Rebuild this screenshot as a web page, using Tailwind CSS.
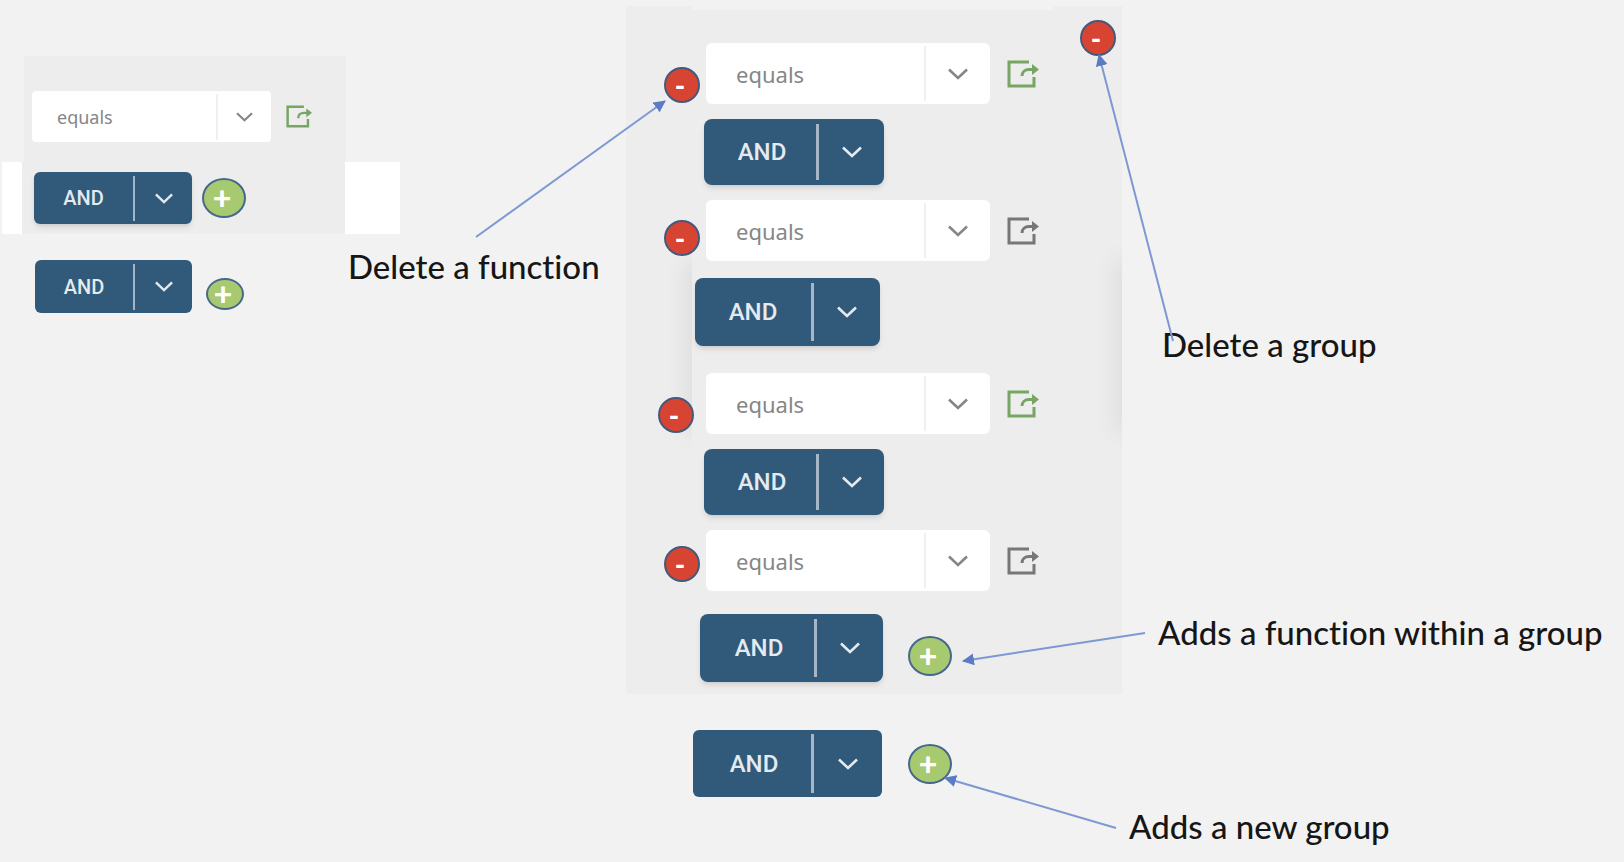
<!DOCTYPE html>
<html lang="en" class="h-full">
<head>
    <meta charset="UTF-8">
    <meta name="viewport" content="width=device-width, initial-scale=1.0">
    <title>Function groups</title>
    <script src="https://cdn.jsdelivr.net/npm/@tailwindcss/browser@4"></script>
</head>
<body class="min-h-full bg-[#f2f2f2] font-['Lato',sans-serif] text-[#161616]">
    <!-- Shared icons -->
    <svg class="absolute h-0 w-0" aria-hidden="true">
        <defs>
            <symbol id="chevron" viewBox="0 0 20 12">
                <path d="M1 1.500 10 10l9-8.500" fill="none" stroke="currentColor" stroke-width="2.600" />
            </symbol>
            <symbol id="share" viewBox="0 0 32 28">
                <path d="M22 2H2v24h25V17" fill="none" stroke="currentColor" stroke-width="3" />
                <path d="M15 16c0-4 3-6.500 7-6.500h5" fill="none" stroke="currentColor" stroke-width="3" />
                <path d="M25 4 32 9.500 25 15z" fill="currentColor" />
            </symbol>
            <marker id="head" viewBox="0 0 12 12" refX="11" refY="6" markerWidth="12" markerHeight="12" markerUnits="userSpaceOnUse" orient="auto">
                <path d="M0 0l12 6-12 6z" fill="#5b7cc4" />
            </marker>
        </defs>
    </svg>

    <main class="flex min-h-screen items-start">
        <!-- Single group -->
        <section class="relative z-10 w-[626px] shrink-0 pt-14">
            <div class="ml-6 flex h-[106px] w-[322px] items-start bg-[#ededed] pt-[35px] pl-2">
                <div class="flex h-[51px] w-[239px] items-center rounded bg-white">
                    <select aria-label="Operator" class="w-[184px] appearance-none pl-[25px] font-['Noto_Sans',sans-serif] text-lg text-[#868686]"><option>equals</option></select>
                    <span class="flex h-[46px] flex-1 items-center justify-center border-l-2 border-[#f0f0f0]"><svg class="h-[10px] w-[17px] text-[#868686]"><use href="#chevron" /></svg></span>
                </div>
                <button aria-label="Open" class="mt-[14px] ml-[15px] text-[#77a563]"><svg class="h-[23px] w-[26px]"><use href="#share" /></svg></button>
            </div>
            <div class="ml-0.5 w-[398px] bg-white pl-5">
                <div class="flex h-[72px] w-[323px] items-start bg-[#ededed] pt-2.5 pl-3">
                    <div class="flex h-[52px] w-[158px] items-center rounded-md bg-[#315a7a] font-['Roboto',sans-serif] text-xl font-medium text-[#e4eaf0] shadow-md">
                        <button class="w-[99px]">AND</button>
                        <button aria-label="Choose" class="flex h-[45px] flex-1 items-center justify-center border-l-2 border-[#a5b7c6]"><svg class="h-[11px] w-[18px]"><use href="#chevron" /></svg></button>
                    </div>
                    <button aria-label="Add function" class="mt-1.5 ml-2.5 h-10 w-11 rounded-[50%] border-2 border-[#45688c] bg-[#a7c96f] pr-1 text-[32px] leading-9 font-black text-white">+</button>
                </div>
            </div>
            <div class="flex items-start pt-3 pl-[35px]">
                <div class="mt-[14px] flex h-[53px] w-[157px] items-center rounded-md bg-[#315a7a] font-['Roboto',sans-serif] text-xl font-medium text-[#e4eaf0]">
                    <button class="w-[98px]">AND</button>
                    <button aria-label="Choose" class="flex h-[46px] flex-1 items-center justify-center border-l-2 border-[#a5b7c6]"><svg class="h-[11px] w-[18px]"><use href="#chevron" /></svg></button>
                </div>
                <button aria-label="Add group" class="mt-8 ml-[14px] h-8 w-[38px] rounded-[50%] border-2 border-[#45688c] bg-[#a7c96f] pr-1 text-[32px] leading-7 font-black text-white">+</button>
                <div class="relative ml-[104px] text-[33px] leading-10 font-medium whitespace-nowrap [font-variant-ligatures:none]">
                    Delete a function
                    <svg class="absolute bottom-full left-32 h-[145px] w-[190px] overflow-visible" viewBox="0 0 190 145"><path d="M0 136 189 0" stroke="#7d98d3" stroke-width="2" marker-end="url(#head)" /></svg>
                </div>
            </div>
        </section>

        <!-- Group with several functions -->
        <section class="w-[496px] shrink-0 pt-1.5">
            <div class="relative h-[688px] bg-[#ededed] pt-[37px]">
                <div class="absolute top-[232px] left-10 h-[220px] w-[26px] overflow-hidden"><div class="mt-6 ml-[26px] h-[170px] w-2 shadow-[0_0_24px_2px_rgb(0_0_0/0.12)]"></div></div>
                <div class="absolute top-[232px] right-0 h-[220px] w-[26px] overflow-hidden"><div class="mt-6 ml-[26px] h-[170px] w-2 shadow-[0_0_24px_2px_rgb(0_0_0/0.12)]"></div></div>
                <div class="absolute top-0 left-[66px] h-1 w-[362px] bg-[#f2f2f2]"></div>
                <button aria-label="Delete group" class="absolute top-[14px] right-1.5 h-9 w-9 rounded-full border-2 border-[#45597c] bg-[#d84432] pr-1 text-[28px] leading-7 font-black text-white">-</button>

                <div class="flex items-start">
                    <div class="relative w-20 pt-6 pl-[38px]"><button aria-label="Delete function" class="block h-9 w-9 rounded-full border-2 border-[#45597c] bg-[#d84432] pr-1 text-[28px] leading-7 font-black text-white">-</button></div>
                    <div class="flex h-[61px] w-[284px] items-center rounded-md bg-white">
                        <select aria-label="Operator" class="w-[218px] appearance-none pt-0.5 pl-[30px] font-['Noto_Sans',sans-serif] text-[22px] text-[#868686]"><option>equals</option></select>
                        <span class="flex h-[55px] flex-1 items-center justify-center border-l-2 border-[#f0f0f0]"><svg class="h-3 w-5 text-[#868686]"><use href="#chevron" /></svg></span>
                    </div>
                    <button aria-label="Open" class="mt-[17px] ml-[17px] text-[#77a563]"><svg class="h-7 w-8"><use href="#share" /></svg></button>
                </div>
                <div class="mt-[15px] ml-[78px] flex h-[66px] w-[180px] items-center rounded-lg bg-[#315a7a] font-['Roboto',sans-serif] text-2xl font-medium text-[#e4eaf0] shadow-md">
                    <button class="w-[112px] pl-1">AND</button>
                    <button aria-label="Choose" class="flex h-14 flex-1 items-center justify-center border-l-3 border-[#a5b7c6]"><svg class="h-3 w-5"><use href="#chevron" /></svg></button>
                </div>

                <div class="mt-[15px] flex items-start">
                    <div class="relative w-20 pt-5 pl-[38px]"><button aria-label="Delete function" class="block h-9 w-9 rounded-full border-2 border-[#45597c] bg-[#d84432] pr-1 text-[28px] leading-7 font-black text-white">-</button></div>
                    <div class="flex h-[61px] w-[284px] items-center rounded-md bg-white">
                        <select aria-label="Operator" class="w-[218px] appearance-none pt-0.5 pl-[30px] font-['Noto_Sans',sans-serif] text-[22px] text-[#868686]"><option>equals</option></select>
                        <span class="flex h-[55px] flex-1 items-center justify-center border-l-2 border-[#f0f0f0]"><svg class="h-3 w-5 text-[#868686]"><use href="#chevron" /></svg></span>
                    </div>
                    <button aria-label="Open" class="mt-[17px] ml-[17px] text-[#777777]"><svg class="h-7 w-8"><use href="#share" /></svg></button>
                </div>
                <div class="relative mt-[17px] ml-[69px] flex h-[68px] w-[185px] items-center rounded-lg bg-[#315a7a] font-['Roboto',sans-serif] text-2xl font-medium text-[#e4eaf0] shadow-md">
                    <button class="w-[116px]">AND</button>
                    <button aria-label="Choose" class="flex h-[58px] flex-1 items-center justify-center border-l-3 border-[#a5b7c6]"><svg class="h-3 w-5"><use href="#chevron" /></svg></button>
                </div>

                <div class="mt-[27px] flex items-start">
                    <div class="relative w-20 pt-6 pl-8"><button aria-label="Delete function" class="block h-9 w-9 rounded-full border-2 border-[#45597c] bg-[#d84432] pr-1 text-[28px] leading-7 font-black text-white">-</button></div>
                    <div class="flex h-[61px] w-[284px] items-center rounded-md bg-white">
                        <select aria-label="Operator" class="w-[218px] appearance-none pt-0.5 pl-[30px] font-['Noto_Sans',sans-serif] text-[22px] text-[#868686]"><option>equals</option></select>
                        <span class="flex h-[55px] flex-1 items-center justify-center border-l-2 border-[#f0f0f0]"><svg class="h-3 w-5 text-[#868686]"><use href="#chevron" /></svg></span>
                    </div>
                    <button aria-label="Open" class="mt-[17px] ml-[17px] text-[#77a563]"><svg class="h-7 w-8"><use href="#share" /></svg></button>
                </div>
                <div class="mt-[15px] ml-[78px] flex h-[66px] w-[180px] items-center rounded-lg bg-[#315a7a] font-['Roboto',sans-serif] text-2xl font-medium text-[#e4eaf0] shadow-md">
                    <button class="w-[112px] pl-1">AND</button>
                    <button aria-label="Choose" class="flex h-14 flex-1 items-center justify-center border-l-3 border-[#a5b7c6]"><svg class="h-3 w-5"><use href="#chevron" /></svg></button>
                </div>

                <div class="mt-[15px] flex items-start">
                    <div class="relative w-20 pt-4 pl-[38px]"><button aria-label="Delete function" class="block h-9 w-9 rounded-full border-2 border-[#45597c] bg-[#d84432] pr-1 text-[28px] leading-7 font-black text-white">-</button></div>
                    <div class="flex h-[61px] w-[284px] items-center rounded-md bg-white">
                        <select aria-label="Operator" class="w-[218px] appearance-none pt-0.5 pl-[30px] font-['Noto_Sans',sans-serif] text-[22px] text-[#868686]"><option>equals</option></select>
                        <span class="flex h-[55px] flex-1 items-center justify-center border-l-2 border-[#f0f0f0]"><svg class="h-3 w-5 text-[#868686]"><use href="#chevron" /></svg></span>
                    </div>
                    <button aria-label="Open" class="mt-[17px] ml-[17px] text-[#777777]"><svg class="h-7 w-8"><use href="#share" /></svg></button>
                </div>
                <div class="mt-[23px] ml-[74px] flex items-start">
                    <div class="flex h-[68px] w-[183px] items-center rounded-lg bg-[#315a7a] font-['Roboto',sans-serif] text-2xl font-medium text-[#e4eaf0] shadow-md">
                        <button class="w-[114px] pl-1">AND</button>
                        <button aria-label="Choose" class="flex h-[58px] flex-1 items-center justify-center border-l-3 border-[#a5b7c6]"><svg class="h-3 w-5"><use href="#chevron" /></svg></button>
                    </div>
                    <button aria-label="Add function" class="mt-[22px] ml-[25px] h-10 w-11 rounded-[50%] border-2 border-[#45688c] bg-[#a7c96f] pr-1 text-[32px] leading-9 font-black text-white">+</button>
                </div>
            </div>

            <div class="mt-9 ml-[67px] flex items-start">
                <div class="flex h-[67px] w-[189px] items-center rounded-md bg-[#315a7a] font-['Roboto',sans-serif] text-2xl font-medium text-[#e4eaf0]">
                    <button class="w-[118px] pl-1">AND</button>
                    <button aria-label="Choose" class="flex h-[59px] flex-1 items-center justify-center border-l-3 border-[#a5b7c6]"><svg class="h-3 w-5"><use href="#chevron" /></svg></button>
                </div>
                <button aria-label="Add group" class="mt-[14px] ml-[26px] h-10 w-11 rounded-[50%] border-2 border-[#45688c] bg-[#a7c96f] pr-1 text-[32px] leading-9 font-black text-white">+</button>
            </div>
        </section>

        <!-- Callouts -->
        <section class="relative z-10 flex-1 pt-[324px] text-[33px] leading-10 font-medium whitespace-nowrap [font-variant-ligatures:none]">
            <div class="relative ml-10">
                Delete a group
                <svg class="absolute bottom-0 -left-16 h-[310px] w-[76px] overflow-visible" viewBox="0 0 76 310"><path d="M75 287 1 1" stroke="#7d98d3" stroke-width="2" marker-end="url(#head)" /></svg>
            </div>
            <div class="relative mt-[248px] ml-9">
                Adds a function within a group
                <svg class="absolute top-5 right-full mr-3 h-[30px] w-[184px] overflow-visible" viewBox="0 0 184 30"><path d="M183 1 1 29" stroke="#7d98d3" stroke-width="2" marker-end="url(#head)" /></svg>
            </div>
            <div class="relative mt-[154px] ml-[7px]">
                Adds a new group
                <svg class="absolute right-full bottom-4 mr-3 h-[52px] w-[172px] overflow-visible" viewBox="0 0 172 52"><path d="M171 50 0 0" stroke="#7d98d3" stroke-width="2" marker-end="url(#head)" /></svg>
            </div>
        </section>
    </main>
</body>
</html>
